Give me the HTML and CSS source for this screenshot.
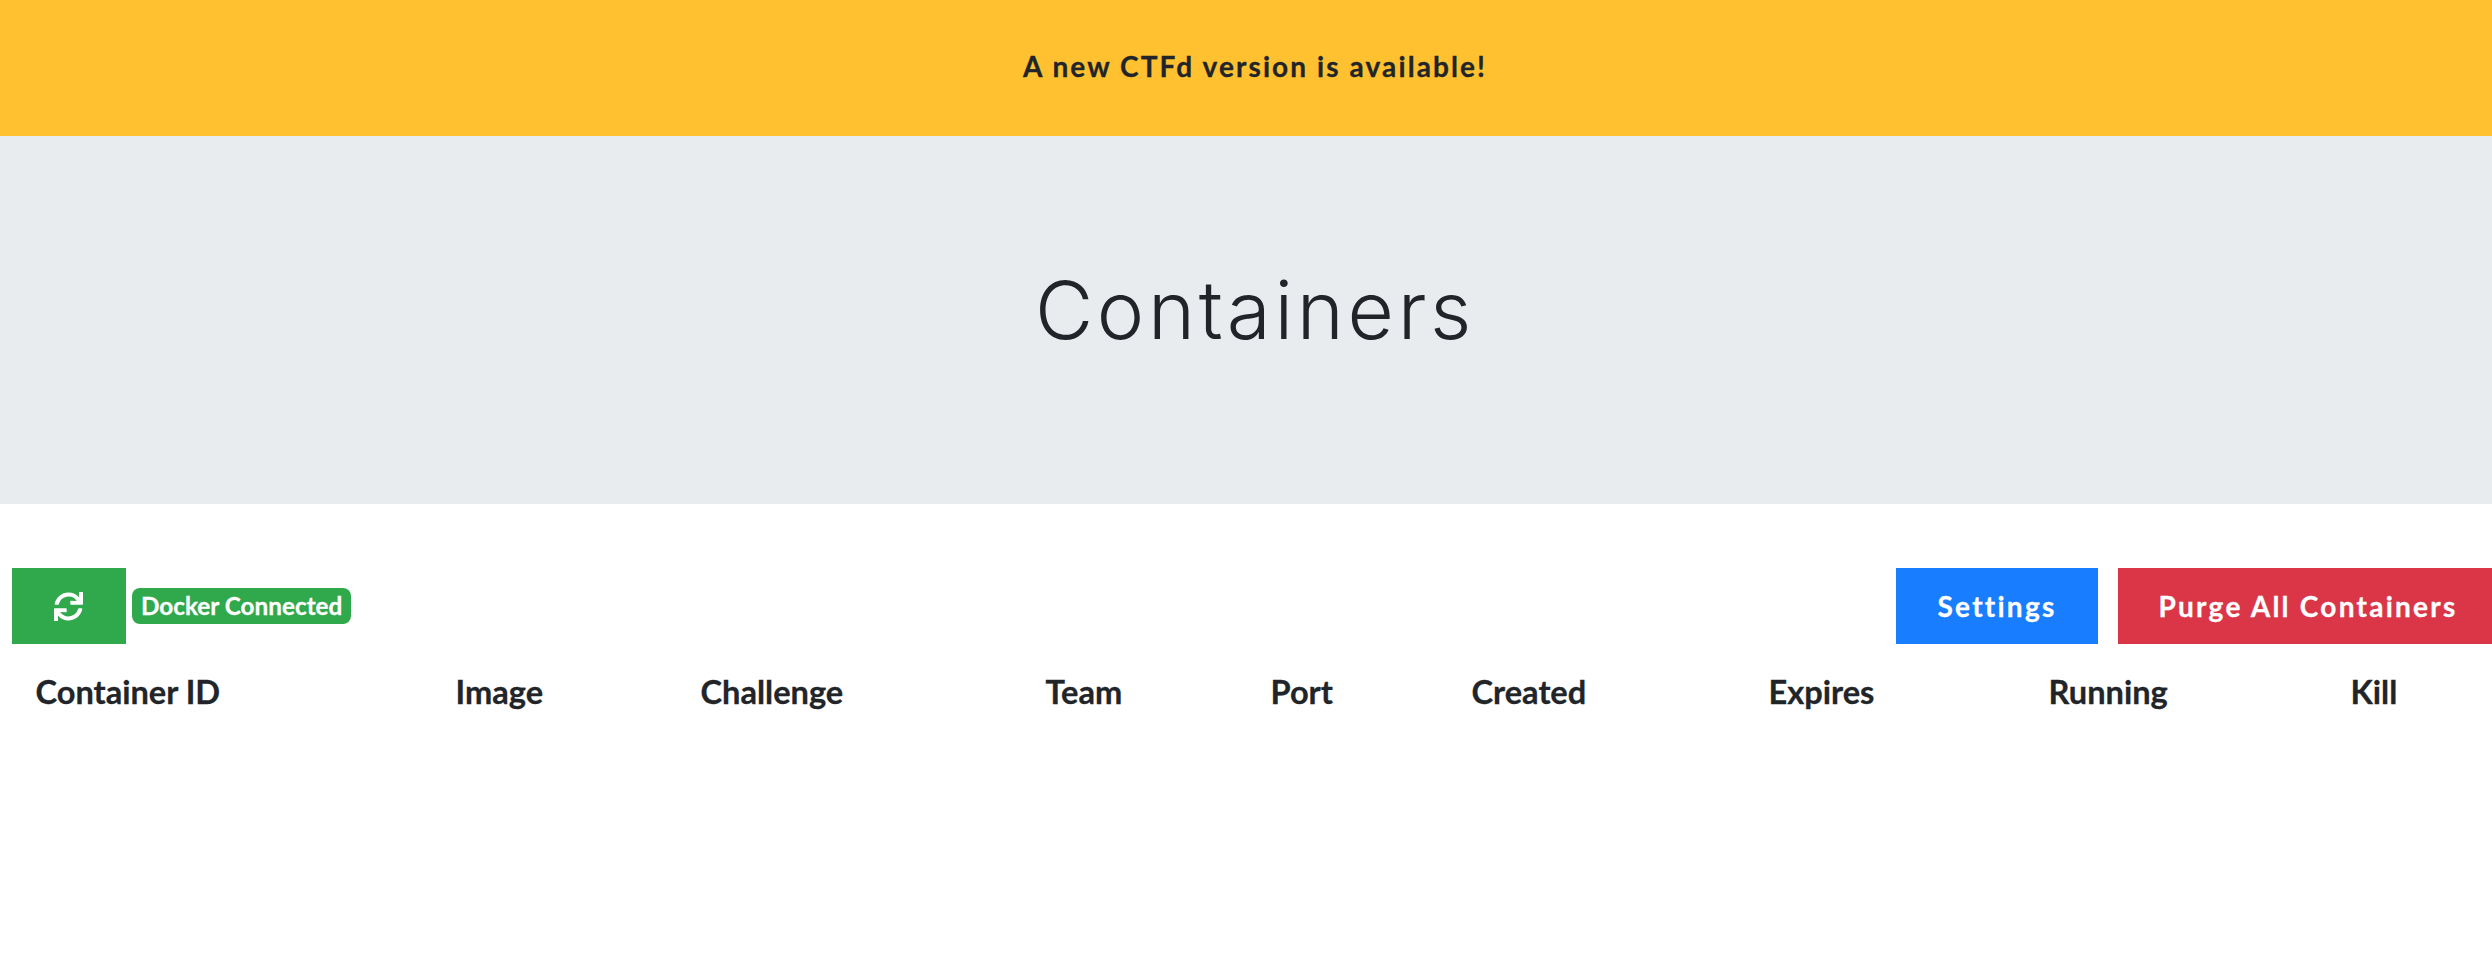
FILE: index.html
```html
<!DOCTYPE html>
<html lang="en">
<head>
<meta charset="utf-8">
<title>Containers</title>
<link rel="stylesheet" href="styles.css">
</head>
<body>
<div class="alert-bar"><strong>A new CTFd version is available!</strong></div>
<header class="jumbotron"><h1>Containers</h1></header>
<main class="content">
  <div class="toolbar">
    <div class="toolbar-left">
      <button class="btn btn-green" type="button" aria-label="Refresh">
        <svg class="icon" viewBox="0 0 512 512" aria-hidden="true"><path fill="currentColor" d="M440.65 12.57l4 82.77A247.16 247.16 0 0 0 255.83 8C134.73 8 33.91 94.92 12.29 209.82A12 12 0 0 0 24.09 224h49.05a12 12 0 0 0 11.67-9.26 175.91 175.91 0 0 1 317-56.94l-101.46-4.86a12 12 0 0 0-12.57 12v47.41a12 12 0 0 0 12 12H500a12 12 0 0 0 12-12V12a12 12 0 0 0-12-12h-47.37a12 12 0 0 0-11.98 12.57zM255.83 432a175.61 175.61 0 0 1-146-77.8l101.8 4.87a12 12 0 0 0 12.57-12v-47.4a12 12 0 0 0-12-12H12a12 12 0 0 0-12 12V500a12 12 0 0 0 12 12h47.35a12 12 0 0 0 12-12.6l-4.15-82.57A247.17 247.17 0 0 0 255.83 504c121.11 0 221.93-86.92 243.55-201.82a12 12 0 0 0-11.8-14.18h-49.05a12 12 0 0 0-11.67 9.26A175.86 175.86 0 0 1 255.83 432z"/></svg>
      </button>
      <span class="badge">Docker Connected</span>
    </div>
    <div class="toolbar-right">
      <button class="btn btn-blue" type="button">Settings</button>
      <button class="btn btn-red" type="button">Purge All Containers</button>
    </div>
  </div>
  <table class="containers">
    <thead>
      <tr>
        <th>Container ID</th><th>Image</th><th>Challenge</th><th>Team</th><th>Port</th><th>Created</th><th>Expires</th><th>Running</th><th>Kill</th>
      </tr>
    </thead>
  </table>
</main>
</body>
</html>
```
FILE: styles.css
```css
* { box-sizing: border-box; }
html, body { margin: 0; padding: 0; }
html { overflow: hidden; }
body {
  width: 2510px;
  font-family: "Lato", "Liberation Sans", sans-serif;
  color: #212529;
  background: #fff;
  font-size: 24px;
}
.alert-bar {
  height: 136px;
  background: #ffc12f;
  text-align: center;
  padding-top: 49px;
  font-size: 28px;
  line-height: 34px;
  letter-spacing: 2.1px;
}
.alert-bar strong { font-weight: 700; -webkit-text-stroke: 0.3px currentColor; }
.jumbotron {
  height: 368px;
  background: #e9ecef;
  display: flex;
  justify-content: center;
  padding-top: 126px;
}
.jumbotron h1 {
  margin: 0;
  font-family: "Inter", "Lato", sans-serif;
  font-size: 80px;
  line-height: 96px;
  font-weight: 300;
  letter-spacing: 3.7px;
}
.content { padding: 64px 12px 0; }
.toolbar {
  display: flex;
  justify-content: space-between;
  align-items: center;
}
.toolbar-left { display: flex; align-items: center; gap: 6px; }
.toolbar-right { display: flex; align-items: center; gap: 20px; }
.btn {
  height: 76px;
  border: 0;
  color: #fff;
  font-family: inherit;
  font-size: 28px;
  font-weight: 700;
  letter-spacing: 2.25px;
  padding: 0;
  display: flex;
  align-items: center;
  justify-content: center;
  -webkit-text-stroke: 0.3px currentColor;
}
.btn-green { background: #30a84c; width: 114px; padding-right: 2px; }
.btn-blue { background: #187dfe; width: 202px; }
.btn-red { background: #da3648; width: 380px; }
.icon { width: 29px; height: 29px; }
.badge {
  background: #30a84c;
  color: #fff;
  font-size: 24.3px;
  font-weight: 700;
  height: 36px;
  line-height: 35px;
  padding: 0 9px;
  border-radius: 8px;
  -webkit-text-stroke: 0.3px currentColor;
}
.containers {
  width: 2486px;
  table-layout: fixed;
  border-collapse: collapse;
  margin-top: 12px;
}
.containers th {
  text-align: left;
  font-size: 32.6px;
  font-weight: 700;
  line-height: 48px;
  padding: 12px 23.5px;
  -webkit-text-stroke: 0.3px currentColor;
}
.containers th:nth-child(1) { width: 420px; }
.containers th:nth-child(2) { width: 245px; }
.containers th:nth-child(3) { width: 345px; }
.containers th:nth-child(4) { width: 225px; }
.containers th:nth-child(5) { width: 201px; }
.containers th:nth-child(6) { width: 297px; }
.containers th:nth-child(7) { width: 280px; }
.containers th:nth-child(8) { width: 302px; }
```
